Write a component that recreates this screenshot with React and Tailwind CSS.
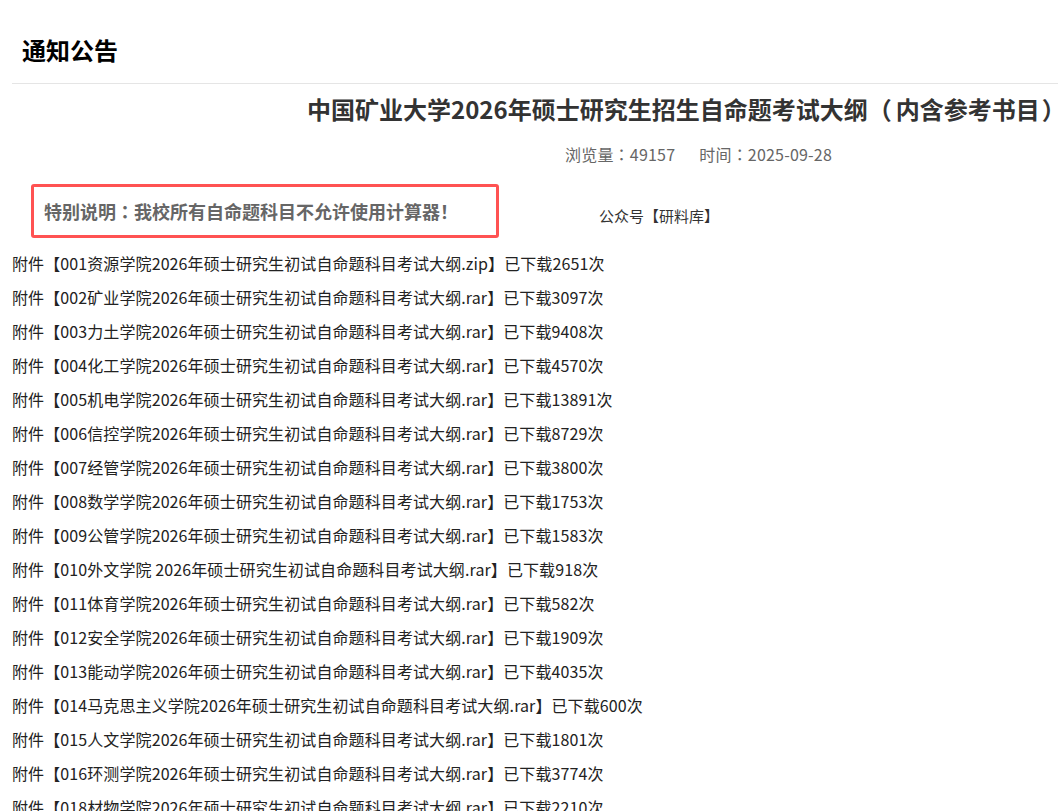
import React from "react";

const files = [
  ["001资源学院", "zip", 2651],
  ["002矿业学院", "rar", 3097],
  ["003力土学院", "rar", 9408],
  ["004化工学院", "rar", 4570],
  ["005机电学院", "rar", 13891],
  ["006信控学院", "rar", 8729],
  ["007经管学院", "rar", 3800],
  ["008数学学院", "rar", 1753],
  ["009公管学院", "rar", 1583],
  ["010外文学院 ", "rar", 918],
  ["011体育学院", "rar", 582],
  ["012安全学院", "rar", 1909],
  ["013能动学院", "rar", 4035],
  ["014马克思主义学院", "rar", 600],
  ["015人文学院", "rar", 1801],
  ["016环测学院", "rar", 3774],
  ["018材物学院", "rar", 2210],
];

// centred full-width punctuation, as on the original page
const Colon = () => (
  <span style={{ fontFamily: '"Noto Sans CJK JP", sans-serif' }}>：</span>
);

export default function App() {
  return (
    <div
      className="h-screen w-full overflow-hidden bg-white"
      style={{ fontFamily: '"Noto Sans CJK SC", "Noto Sans", sans-serif' }}
    >
      {/* Section header */}
      <div className="ml-[12px] border-b border-[#e5e5e5] pt-[32px] pb-[15px] pl-[10px]">
        <h1 className="text-[24px] leading-[36px] font-bold text-black">通知公告</h1>
      </div>

      <div className="ml-[12px]">
        {/* Article title */}
        <h2 className="mt-[7px] whitespace-nowrap pl-[295px] text-[24px] leading-[36px] font-bold text-[#333]">
          中国矿业大学2026年硕士研究生招生自命题考试大纲
          <span className="mr-[4px]">（</span>内含参考书目<span className="ml-[2px]">）</span>
        </h2>

        {/* Meta */}
        <div className="mt-[15px] flex whitespace-nowrap pl-[553px] text-[16px] leading-[24px] tracking-[0.2px] text-[#666]">
          <span>浏览量<Colon />49157</span>
          <span className="ml-[24px]">时间<Colon />2025-09-28</span>
        </div>

        {/* Notice box */}
        <div className="mt-[18px] flex items-start">
          <div className="ml-[19px] flex h-[54px] w-[468px] items-center rounded-[3px] border-[3px] border-[#ff5252] pl-[10px]">
            <span className="text-[18px] leading-[27px] font-bold text-[#666]">
              特别说明<Colon />我校所有自命题科目不允许使用计算器！
            </span>
          </div>
          <span className="mt-[21px] ml-[100px] text-[15px] leading-[22px] text-[#333]">
            公众号【研料库】
          </span>
        </div>

        {/* Attachments */}
        <ul className="mt-[8px]">
          {files.map(([name, ext, count]) => (
            <li
              key={name}
              className="whitespace-nowrap text-[16px] leading-[34px] tracking-[0.1px] text-[#222]"
            >
              附件【{name}2026年硕士研究生初试自命题科目考试大纲.{ext}】已下载{count}次
            </li>
          ))}
        </ul>
      </div>
    </div>
  );
}
